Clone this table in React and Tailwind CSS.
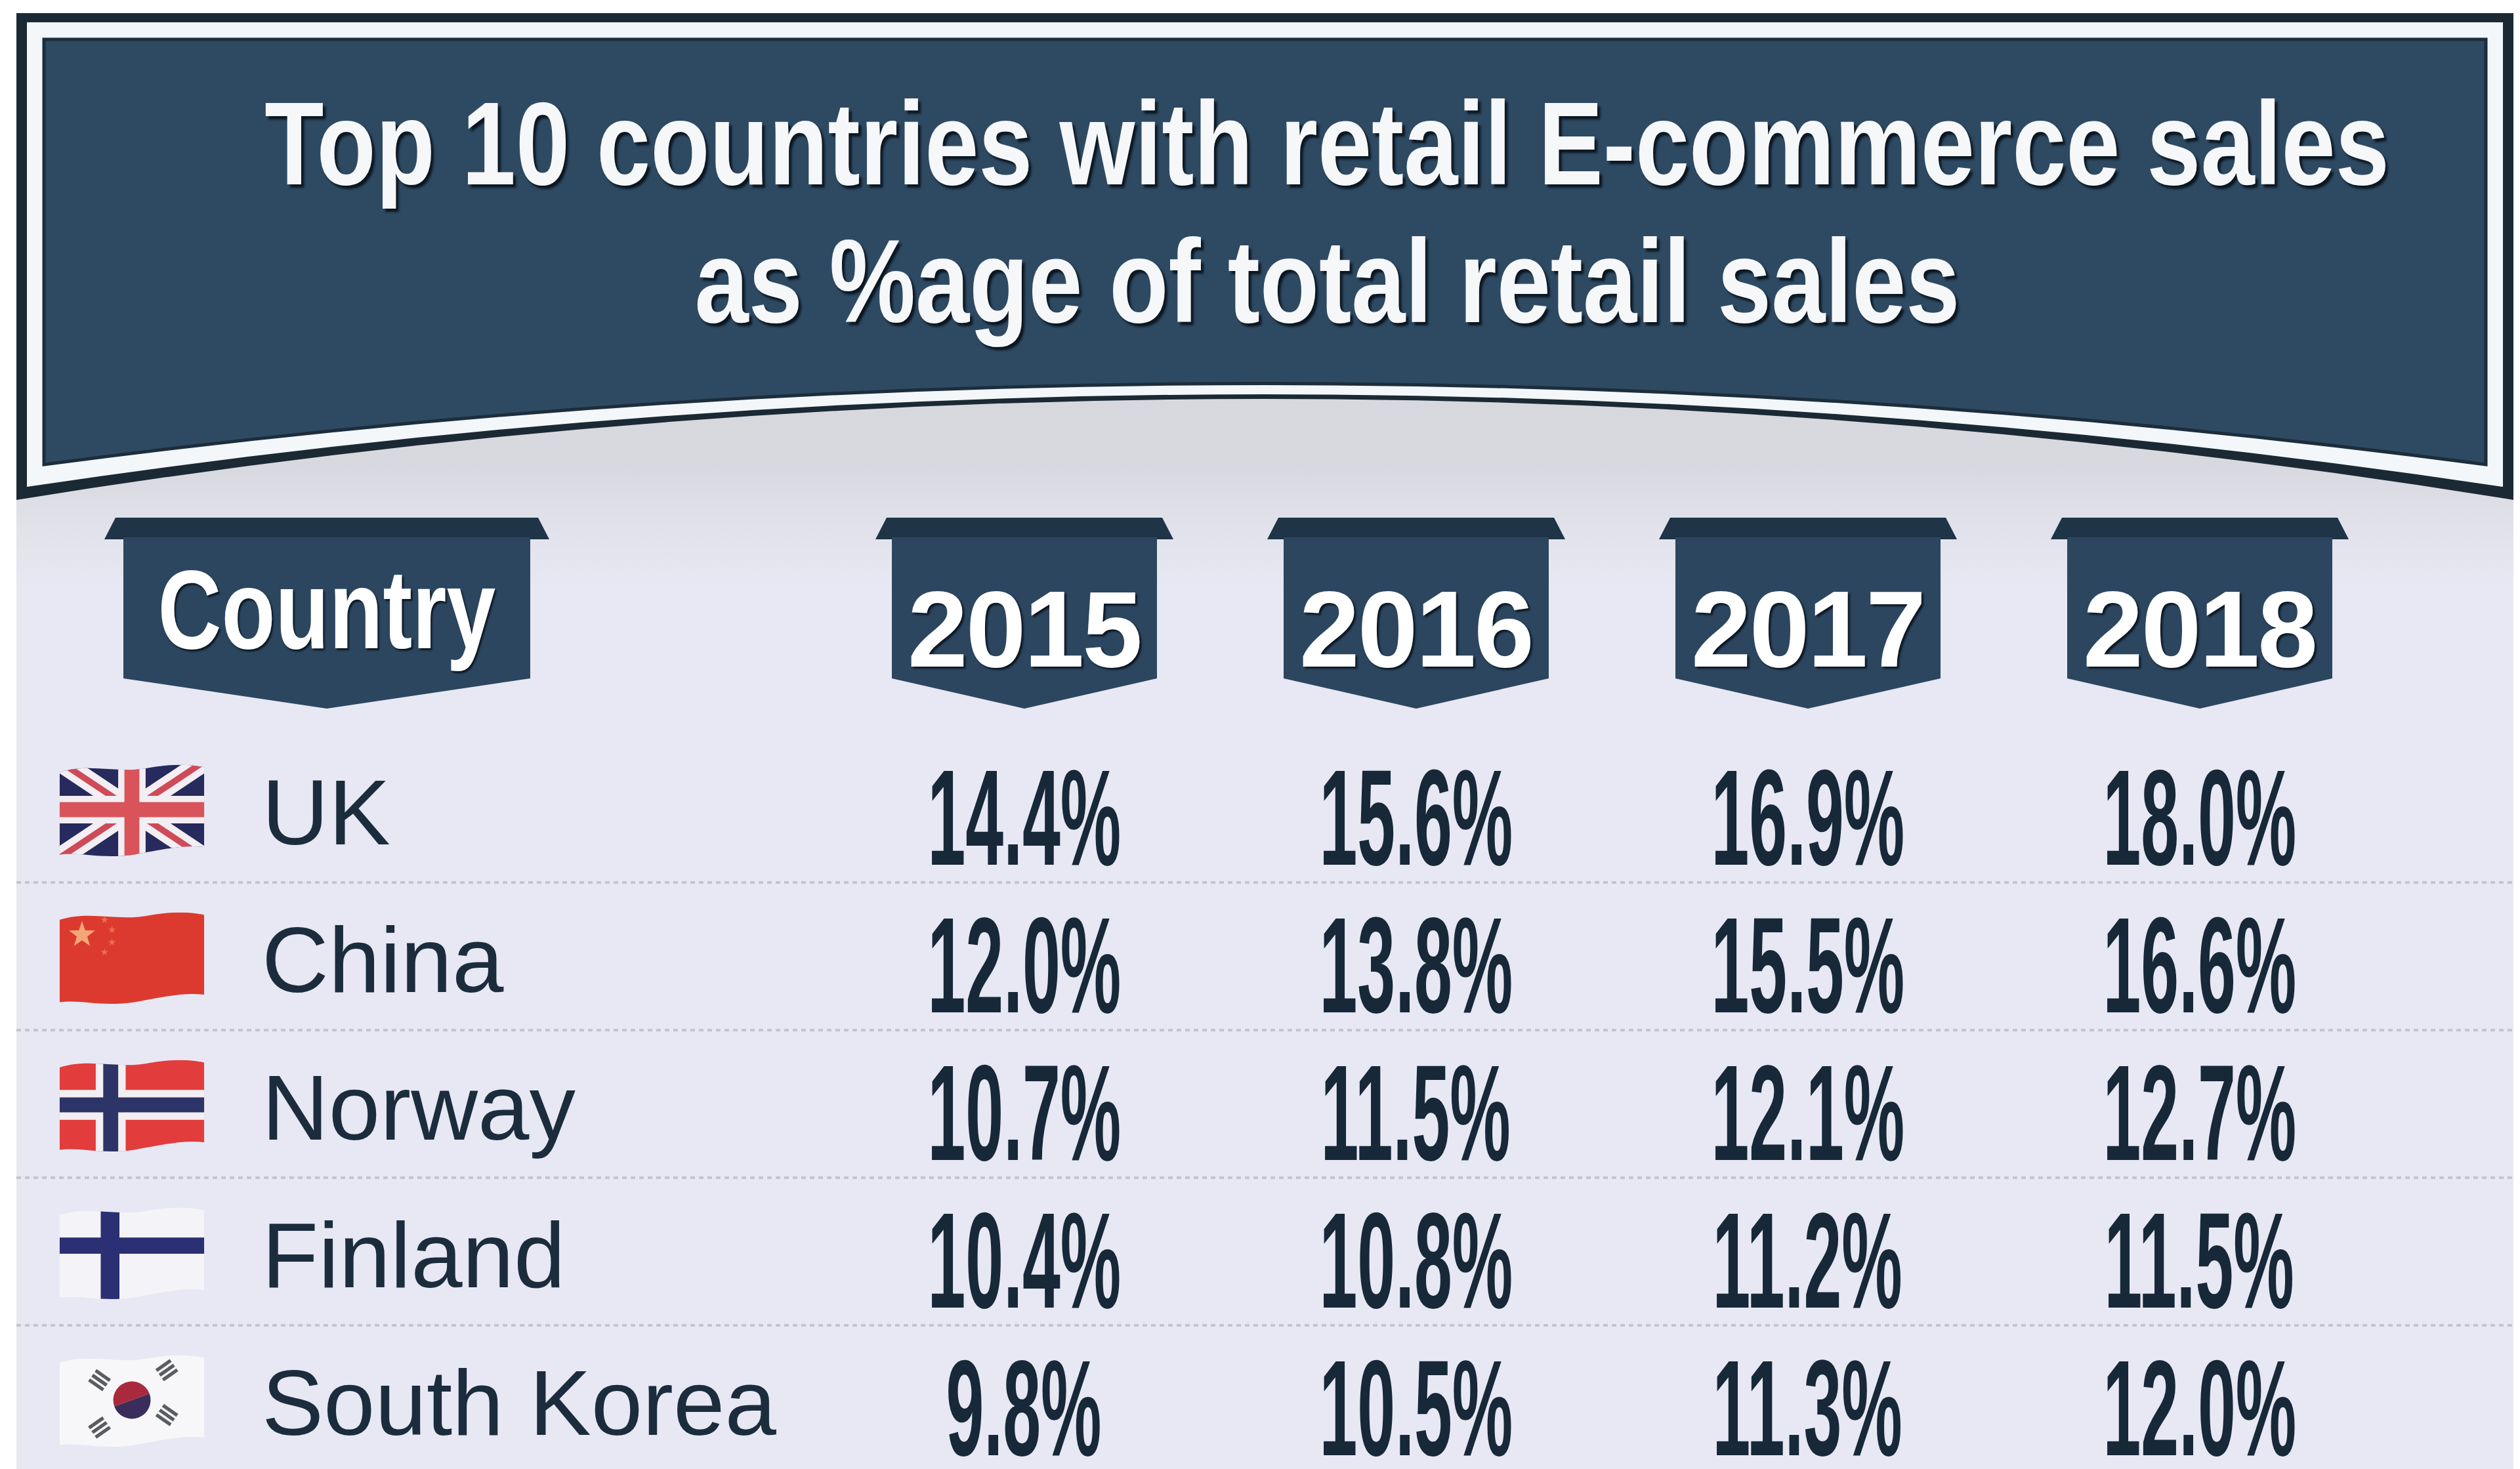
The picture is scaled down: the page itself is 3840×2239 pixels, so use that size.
import React from 'react';

// --- table data ---
const rows = [
    { name: 'UK', flag: 'uk', values: ['14.4%', '15.6%', '16.9%', '18.0%'] },
    { name: 'China', flag: 'cn', values: ['12.0%', '13.8%', '15.5%', '16.6%'] },
    { name: 'Norway', flag: 'no', values: ['10.7%', '11.5%', '12.1%', '12.7%'] },
    { name: 'Finland', flag: 'fi', values: ['10.4%', '10.8%', '11.2%', '11.5%'] },
    { name: 'South Korea', flag: 'kr', values: ['9.8%', '10.5%', '11.3%', '12.0%'] },
];

const years = ['2015', '2016', '2017', '2018'];

const star = (cx, cy, r) => {
    const pts = [];
    for (let i = 0; i < 10; i++) {
        const a = ((-90 + i * 36) * Math.PI) / 180;
        const rr = i % 2 ? r * 0.4 : r;
        pts.push(`${(cx + rr * Math.cos(a)).toFixed(2)},${(cy + rr * Math.sin(a)).toFixed(2)}`);
    }
    return pts.join(' ');
};

// waving flag outline, shared by all flags
const WAVE = 'M1,5 C14,1 24,6 38,3 C47,1.5 54,2 59,3 L59,35 C50,34 43,36 31,38 C18,40 10,37 1,38 Z';

const Flag = ({ code }) => {
    const id = `wave-${code}`;
    let body = null;
    if (code === 'uk') {
        body = (
            <>
                <rect width="60" height="40" fill="#262a5c" />
                <path d="M0,0 L60,40 M60,0 L0,40" stroke="#f3eef3" strokeWidth="8" />
                <path d="M0,0 L60,40 M60,0 L0,40" stroke="#cf4a58" strokeWidth="2.5" />
                <path d="M30,0 V40 M0,20 H60" stroke="#f3eef3" strokeWidth="11" />
                <path d="M30,0 V40 M0,20 H60" stroke="#d8545a" strokeWidth="6" />
            </>
        );
    } else if (code === 'cn') {
        body = (
            <>
                <rect width="60" height="40" fill="#dd3a2f" />
                <polygon points={star(10, 11, 5.5)} fill="#f5a679" />
                <polygon points={star(19, 5, 1.6)} fill="#ea6d4c" />
                <polygon points={star(22, 9, 1.6)} fill="#ea6d4c" />
                <polygon points={star(22, 14, 1.6)} fill="#ea6d4c" />
                <polygon points={star(19, 18, 1.6)} fill="#ea6d4c" />
            </>
        );
    } else if (code === 'no') {
        body = (
            <>
                <rect width="60" height="40" fill="#e23c3c" />
                <rect x="15.5" width="12" height="40" fill="#f2eef2" />
                <rect y="14" width="60" height="12" fill="#f2eef2" />
                <rect x="18.5" width="6" height="40" fill="#2c3468" />
                <rect y="17" width="60" height="6" fill="#2c3468" />
            </>
        );
    } else if (code === 'fi') {
        body = (
            <>
                <rect width="60" height="40" fill="#f4f4f8" />
                <rect x="17.5" width="7.5" height="40" fill="#2b2f74" />
                <rect y="14" width="60" height="6.5" fill="#2b2f74" />
            </>
        );
    } else if (code === 'kr') {
        body = (
            <>
                <rect width="60" height="40" fill="#f7f7f9" />
                <g transform="rotate(-20 30 20)">
                    <path d="M22.5,20 A7.5,7.5 0 0 1 37.5,20 Z" fill="#a92a3d" />
                    <path d="M22.5,20 A7.5,7.5 0 0 0 37.5,20 Z" fill="#3a2d5c" />
                </g>
                {[[17, 12, 35], [44, 8, -35], [17, 31, -35], [44, 26, 35]].map(([x, y, r], i) => (
                    <g key={i} transform={`rotate(${r} ${x} ${y})`} fill="#5a5d60">
                        <rect x={x - 3.5} y={y - 3} width="7" height="1.4" />
                        <rect x={x - 3.5} y={y - 0.7} width="7" height="1.4" />
                        <rect x={x - 3.5} y={y + 1.6} width="7" height="1.4" />
                    </g>
                ))}
            </>
        );
    }
    return (
        <svg viewBox="0 0 60 40" className="w-[228px] h-[152px] shrink-0">
            <defs>
                <clipPath id={id}>
                    <path d={WAVE} />
                </clipPath>
            </defs>
            <g clipPath={`url(#${id})`}>{body}</g>
        </svg>
    );
};

// --- hanging header tab (dark strip on top, chevron at the bottom) ---
const Tab = ({ w, ear, children, textClass }) => (
    <div className="relative h-[291px]" style={{ width: w }}>
        <svg viewBox={`0 0 ${w} 291`} className="absolute inset-0 w-full h-full">
            <path d={`M17,0 H${w - 17} L${w},33 H0 Z`} fill="#1f3447" />
            <path d={`M${ear},30 H${w - ear} V245 L${w / 2},291 L${ear},245 Z`} fill="#2c4660" />
        </svg>
        <div className={`relative flex justify-center text-white leading-none whitespace-nowrap font-['Liberation_Sans',Arial,sans-serif] font-bold [text-shadow:3px_3px_3px_#0c1722] ${textClass}`}>
            {children}
        </div>
    </div>
);

const App = () => {
    return (
        <div className="w-[3840px] h-[2239px] overflow-hidden bg-white pl-[25px] pt-[20px]">
            <div className="relative w-[3805px] h-[2219px] overflow-hidden bg-[linear-gradient(to_bottom,#d3d4da_0px,#d8d9df_690px,#e1e2eb_790px,#e7e8f3_880px)]">
                {/* --- Title banner --- */}
                <div className="relative h-[745px]">
                    <svg viewBox="0 0 3805 745" className="absolute inset-0 w-full h-full">
                        <path d="M0,0 H3805 V742 Q1902,434 0,742 Z" fill="#1b2934" />
                        <path d="M16,14 H3789 V722 Q1902,440 16,722 Z" fill="#f3f7fa" />
                        <path d="M42,40 H3763 V688 Q1902,441 42,688 Z" fill="#2e4a63" stroke="#1c2d3c" strokeWidth="5" />
                    </svg>
                    <div className="relative flex flex-col items-center pt-[94px] pl-[190px] whitespace-nowrap font-['Liberation_Sans',Arial,sans-serif] font-bold text-[180px] leading-[210px] text-[#f6f7f9] [text-shadow:5px_5px_4px_#0b1620]">
                        <div className="scale-x-[0.82]">Top 10 countries with retail E-commerce sales</div>
                        <div className="scale-x-[0.82]">as %age of total retail sales</div>
                    </div>
                </div>

                {/* --- Column headers --- */}
                <div className="mt-[24px] grid grid-cols-[1237px_repeat(4,597px)] h-[291px]">
                    <div className="pl-[134px]">
                        <Tab w={678} ear={29} textClass="pt-[55px] text-[170px]">
                            <span className="inline-block scale-x-[0.79]">Country</span>
                        </Tab>
                    </div>
                    {years.map((y) => (
                        <div key={y} className="flex justify-center">
                            <Tab w={454} ear={25} textClass="pt-[88px] text-[165px] tracking-[-3px]">
                                {y}
                            </Tab>
                        </div>
                    ))}
                </div>

                {/* --- Data rows --- */}
                <div className="mt-[42px]">
                    {rows.map((r) => (
                        <div key={r.name}>
                            <div className="grid grid-cols-[1237px_repeat(4,597px)] h-[221px]">
                                <div className="flex items-start pl-[62px]">
                                    <div className="mt-[36px]">
                                        <Flag code={r.flag} />
                                    </div>
                                    <div className="ml-[84px] mt-[46px] whitespace-nowrap font-['Liberation_Sans',Arial,sans-serif] text-[141px] leading-none text-[#1b2c3d]">
                                        {r.name}
                                    </div>
                                </div>
                                {r.values.map((v, i) => (
                                    <div key={i} className="flex justify-center pt-[39px]">
                                        <span className="inline-block scale-x-[0.5] whitespace-nowrap font-['Liberation_Sans',Arial,sans-serif] font-bold text-[208px] leading-[170px] text-[#172838]">
                                            {v}
                                        </span>
                                    </div>
                                ))}
                            </div>
                            <div className="h-[4px] bg-[repeating-linear-gradient(90deg,#c3c4cf_0px,#c3c4cf_7px,transparent_7px,transparent_13px)]" />
                        </div>
                    ))}
                </div>
            </div>
        </div>
    );
};

export default App;
